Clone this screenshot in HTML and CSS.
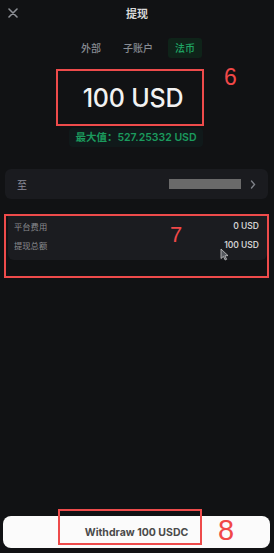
FILE: index.html
```html
<!DOCTYPE html>
<html lang="zh">
<head>
<meta charset="utf-8">
<link rel="stylesheet" href="styles.css">
</head>
<body>
<div class="screen">
  <header class="header">
    <svg class="close" width="10" height="10" viewBox="0 0 10 10"><path d="M1 1L9 9M9 1L1 9" stroke="#8d9096" stroke-width="1.6" stroke-linecap="round"/></svg>
    <div class="title">提现</div>
  </header>
  <nav class="tabs">
    <span class="tab">外部</span>
    <span class="tab">子账户</span>
    <span class="tab active">法币</span>
  </nav>
  <div class="amount-wrap">
    <div class="amount-box">100 USD</div>
    <span class="mark mark6">6</span>
  </div>
  <div class="max">最大值：527.25332 USD</div>
  <div class="to-row">
    <span class="to-label">至</span>
    <span class="to-right"><span class="masked"></span><svg width="6" height="9" viewBox="0 0 6 9"><path d="M1.5 1L4.5 4.5L1.5 8" stroke="#7d8087" stroke-width="1.4" fill="none" stroke-linecap="round"/></svg></span>
  </div>
  <div class="fee-box">
    <div class="fee-card">
      <div class="fee-row"><span class="fee-label">平台费用</span><span class="fee-val">0 USD</span></div>
      <div class="fee-row"><span class="fee-label">提现总额</span><span class="fee-val">100 USD</span></div>
    </div>
    <span class="mark mark7">7</span>
    <svg class="cursor" width="9" height="13" viewBox="0 0 9 13"><path d="M1 1L1 10.5L3.4 8.4L5.2 12L6.6 11.3L4.9 7.8L8 7.6Z" fill="#55585e" stroke="#c9c9c9" stroke-width="0.8"/></svg>
  </div>
  <div class="spacer"></div>
  <div class="btn-wrap">
    <button class="withdraw">Withdraw 100 USDC</button>
    <span class="btn-mark"></span>
    <span class="mark mark8">8</span>
  </div>
</div>
</body>
</html>
```
FILE: styles.css
```css
* { box-sizing: border-box; margin: 0; padding: 0; }
html, body { width: 274px; height: 553px; background: #111214; overflow: hidden; }
body { font-family: "Inter", "Noto Sans CJK SC", sans-serif; color: #e6e6e6; }
.screen { height: 553px; display: flex; flex-direction: column; position: relative; }
.header { height: 26px; position: relative; display: flex; align-items: center; justify-content: center; }
.close { position: absolute; left: 8px; top: 8px; }
.title { font-family: "Noto Sans CJK SC", sans-serif; font-size: 11px; font-weight: 700; color: #d8d8d8; }
.tabs { margin-top: 12px; height: 20px; display: flex; justify-content: center; align-items: center; padding-left: 2px; }
.tab { font-family: "Noto Sans CJK SC", sans-serif; font-size: 10px; font-weight: 500; color: #878b92; padding: 0 7px; height: 20px; line-height: 20px; border-radius: 3px; margin: 0 4px; }
.tab.active { color: #1fa564; background: #0f2319; }
.amount-wrap { margin-top: 11px; position: relative; display: flex; }
.amount-box { margin-left: 56px; width: 148px; height: 57px; border: 2px solid #ee4b4b; display: flex; align-items: center; justify-content: center; font-size: 25px; font-weight: 500; color: #f2f2f2; letter-spacing: -0.2px; padding: 1px 0 0 6px; }
.mark { position: absolute; color: #f04848; font-family: "Liberation Sans", sans-serif; line-height: 1; }
.mark6 { left: 224px; top: -3px; font-size: 23px; }
.max { align-self: center; margin-top: 2px; height: 19px; line-height: 19px; padding: 0 6px; margin-left: -2px; font-size: 10.5px; font-weight: 600; color: #1b9a5d; background: #10191a; border-radius: 4px; }
.to-row { margin: 22px 6px 0 5px; height: 30px; background: #1a1b1f; border-radius: 6px; display: flex; align-items: center; justify-content: space-between; padding: 0 12px; }
.to-label { font-family: "Noto Sans CJK SC", sans-serif; font-size: 10px; color: #8c8c9a; }
.to-right { display: flex; align-items: center; gap: 9px; }
.masked { width: 72px; height: 10px; background: #6a6a6a; }
.fee-box { margin: 15px 5px 0 4px; height: 64px; border: 2px solid #ee4b4b; position: relative; }
.fee-card { margin: 0 0 0 2px; height: 44px; background: #1b1c20; border-radius: 0 0 6px 6px; padding: 1px 8px 0 6px; display: flex; flex-direction: column; gap: 1px; }
.fee-row { display: flex; justify-content: space-between; align-items: center; height: 18px; }
.fee-label { font-family: "Noto Sans CJK SC", sans-serif; font-size: 8.3px; color: #8a8b8f; }
.fee-val { font-size: 8.5px; font-weight: 600; color: #cfcfcf; }
.mark7 { left: 164px; top: 8px; font-size: 22px; }
.cursor { position: absolute; left: 214px; top: 32px; }
.spacer { flex: 1; }
.btn-wrap { position: relative; margin: 0 4px 5px 3px; }
.withdraw { width: 100%; height: 32px; background: #fbfbfb; border: none; border-radius: 8px; font-family: "Inter", sans-serif; font-size: 10.5px; font-weight: 700; color: #4a4a4a; display: block; }
.btn-mark { position: absolute; left: 55px; top: -7px; width: 144px; height: 36px; border: 2px solid #ee4b4b; }
.mark8 { left: 215px; top: 0px; font-size: 29px; }
```
